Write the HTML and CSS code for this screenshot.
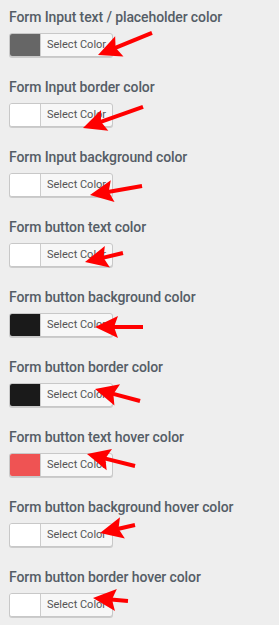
FILE: index.html
```html
<!DOCTYPE html>
<html lang="en">
<head>
    <meta charset="UTF-8">
    <meta name="viewport" content="width=device-width, initial-scale=1.0">
    <title>Form Colors</title>
    <link rel="stylesheet" href="styles.css">
</head>
<body>
    <div class="panel">
        <div class="field">
            <label>Form Input text / placeholder color</label>
            <button class="color-result"><span class="swatch" style="background:#666666"></span><span class="color-text">Select Color</span></button>
        </div>
        <div class="field">
            <label>Form Input border color</label>
            <button class="color-result"><span class="swatch" style="background:#ffffff"></span><span class="color-text">Select Color</span></button>
        </div>
        <div class="field">
            <label>Form Input background color</label>
            <button class="color-result"><span class="swatch" style="background:#ffffff"></span><span class="color-text">Select Color</span></button>
        </div>
        <div class="field">
            <label>Form button text color</label>
            <button class="color-result"><span class="swatch" style="background:#ffffff"></span><span class="color-text">Select Color</span></button>
        </div>
        <div class="field">
            <label>Form button background color</label>
            <button class="color-result"><span class="swatch" style="background:#1a1a1a"></span><span class="color-text">Select Color</span></button>
        </div>
        <div class="field">
            <label>Form button border color</label>
            <button class="color-result"><span class="swatch" style="background:#1a1a1a"></span><span class="color-text">Select Color</span></button>
        </div>
        <div class="field">
            <label>Form button text hover color</label>
            <button class="color-result"><span class="swatch" style="background:#ef5353"></span><span class="color-text">Select Color</span></button>
        </div>
        <div class="field">
            <label>Form button background hover color</label>
            <button class="color-result"><span class="swatch" style="background:#ffffff"></span><span class="color-text">Select Color</span></button>
        </div>
        <div class="field">
            <label>Form button border hover color</label>
            <button class="color-result"><span class="swatch" style="background:#ffffff"></span><span class="color-text">Select Color</span></button>
        </div>
    </div>

    <!-- annotation arrows drawn over the screenshot -->
    <svg class="arrows" width="279" height="625" viewBox="0 0 279 625">
        <defs>
            <g id="arrow-head">
                <path d="M0 0 L23 -11 L19 0 L23 11 Z"/>
            </g>
        </defs>
        <g fill="#ff0000">
            <g transform="translate(98 55) rotate(-22.2)"><use href="#arrow-head"/><rect x="18" y="-2" width="40.3" height="4"/></g>
            <g transform="translate(83 128) rotate(-19.3)"><use href="#arrow-head"/><rect x="18" y="-2" width="45.6" height="4"/></g>
            <g transform="translate(90 195) rotate(-9.8)"><use href="#arrow-head"/><rect x="18" y="-2" width="34.8" height="4"/></g>
            <g transform="translate(85 262) rotate(-13.3)"><use href="#arrow-head"/><rect x="18" y="-2" width="21" height="4"/></g>
            <g transform="translate(95 327) rotate(0)"><use href="#arrow-head"/><rect x="18" y="-2" width="30" height="4"/></g>
            <g transform="translate(95 389) rotate(14.9)"><use href="#arrow-head"/><rect x="18" y="-2" width="28.6" height="4"/></g>
            <g transform="translate(87 454) rotate(14)"><use href="#arrow-head"/><rect x="18" y="-2" width="31.5" height="4"/></g>
            <g transform="translate(100 533) rotate(-12.9)"><use href="#arrow-head"/><rect x="18" y="-2" width="17.9" height="4"/></g>
            <g transform="translate(93 598) rotate(4.9)"><use href="#arrow-head"/><rect x="18" y="-2" width="17.1" height="4"/></g>
        </g>
    </svg>
</body>
</html>
```

FILE: styles.css
```css
/* Base styles */
body {
    font-family: Roboto, "Liberation Sans", sans-serif;
    margin: 0;
    padding: 0;
    background: #eeeeee;
    position: relative;
}

.panel {
    padding: 0 9px;
}

.field {
    padding: 9px 0 13px;
}

.field label {
    display: block;
    font-size: 14px;
    line-height: 17px;
    font-weight: 500;
    letter-spacing: -0.1px;
    color: #555d66;
    margin-bottom: 7px;
}

.color-result {
    display: flex;
    align-items: stretch;
    width: 104px;
    height: 24px;
    padding: 0;
    border: 1px solid #c8c8c8;
    border-radius: 3px;
    background: #f7f7f7;
    box-shadow: 0 1px 0 #cccccc;
    overflow: hidden;
    cursor: pointer;
}

.swatch {
    display: block;
    width: 30px;
    flex: none;
    border-right: 1px solid #cccccc;
}

.color-text {
    flex: 1;
    font-family: Roboto, "Liberation Sans", sans-serif;
    font-size: 11px;
    line-height: 22px;
    color: #555555;
    text-align: left;
    padding-left: 6px;
    white-space: nowrap;
}

.arrows {
    position: absolute;
    top: 0;
    left: 0;
    pointer-events: none;
}
```
